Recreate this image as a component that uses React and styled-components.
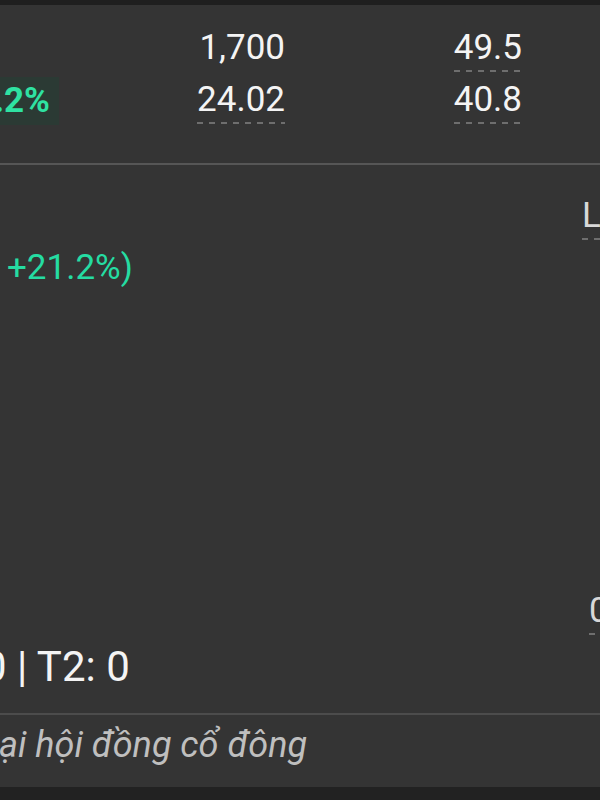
import React from 'react'
import styled, { createGlobalStyle } from 'styled-components'

const GlobalStyle = createGlobalStyle`
  html, body {
    margin: 0;
    padding: 0;
    background: #222222;
  }
  body {
    font-family: Roboto, "Noto Sans", "Liberation Sans", sans-serif;
    overflow: hidden;
  }
`

const Screen = styled.div`
  width: 600px;
  height: 800px;
  overflow: hidden;
  display: flex;
  flex-direction: column;
  background: #343434;
  color: #f2f2f2;
`

const TopBar = styled.div`
  height: 5px;
  flex-shrink: 0;
  background: #1f1f1f;
`

const BottomBar = styled.div`
  flex: 1;
  background: #222222;
`

const Divider = styled.div`
  height: 2px;
  flex-shrink: 0;
  background: ${p => p.$color || '#565656'};
`

const Stats = styled.section`
  height: 158px;
  box-sizing: border-box;
  padding-top: 21px;
  display: flex;
  flex-direction: column;
  gap: 5px;
`

const StatRow = styled.div`
  display: grid;
  grid-template-columns: 59px 226px 237px;
  align-items: center;
  min-height: 46px;
`

const Cell = styled.div`
  display: flex;
  justify-content: flex-end;
  white-space: nowrap;
`

const Value = styled.span`
  display: inline-block;
  font-size: 35px;
  line-height: 44px;
  padding-bottom: 2px;
  color: ${p => p.$color || '#f4f4f4'};
  background-image: ${p =>
    p.$dashed
      ? 'repeating-linear-gradient(to right, #6e6e6e 0 6px, transparent 6px 12px)'
      : 'none'};
  background-size: 100% 2px;
  background-position: left bottom;
  background-repeat: no-repeat;
`

const Badge = styled.span`
  display: inline-block;
  font-size: 35px;
  font-weight: 700;
  line-height: 44px;
  padding: 2px 9px 2px 0;
  color: #2fe2a2;
  background: #2b3a34;
`

const Chart = styled.section`
  height: 548px;
  display: flex;
`

const ChartMain = styled.div`
  flex: 1;
  box-sizing: border-box;
  padding: 81px 0 21px;
  display: flex;
  flex-direction: column;
  justify-content: space-between;
  white-space: nowrap;
`

const Change = styled.div`
  font-size: 35px;
  line-height: 44px;
  padding-left: 7px;
  color: #25dca2;
`

const Sessions = styled.div`
  font-size: 42px;
  line-height: 50px;
  margin-left: -17px;
  color: #f4f4f4;
`

const Axis = styled.div`
  width: 18px;
  box-sizing: border-box;
  padding: 29px 0 78px;
  display: flex;
  flex-direction: column;
  justify-content: space-between;
  overflow: visible;
  white-space: nowrap;
`

const AxisLabel = styled(Value)`
  margin-left: ${p => p.$indent || 0}px;
  color: #d8d8d8;
  align-self: flex-start;
`

const Notice = styled.div`
  height: 72px;
  flex-shrink: 0;
  box-sizing: border-box;
  padding-bottom: 12px;
  font-size: 36px;
  line-height: 60px;
  font-style: italic;
  color: #bfbfbf;
  white-space: nowrap;
  margin-left: -1px;
`

export default function App() {
  return (
    <>
      <GlobalStyle />
      <Screen>
        <TopBar />
        <Stats>
          <StatRow>
            <Cell />
            <Cell><Value>1,700</Value></Cell>
            <Cell><Value $dashed>49.5</Value></Cell>
          </StatRow>
          <StatRow>
            <Cell><Badge>+21.2%</Badge></Cell>
            <Cell><Value $dashed>24.02</Value></Cell>
            <Cell><Value $dashed>40.8</Value></Cell>
          </StatRow>
        </Stats>
        <Divider />
        <Chart>
          <ChartMain>
            <Change>+21.2%)</Change>
            <Sessions>0 | T2: 0</Sessions>
          </ChartMain>
          <Axis>
            <AxisLabel $dashed>L</AxisLabel>
            <AxisLabel $dashed $indent={7}>0</AxisLabel>
          </Axis>
        </Chart>
        <Divider $color="#4c4c4c" />
        <Notice>ại hội đồng cổ đông</Notice>
        <BottomBar />
      </Screen>
    </>
  )
}
